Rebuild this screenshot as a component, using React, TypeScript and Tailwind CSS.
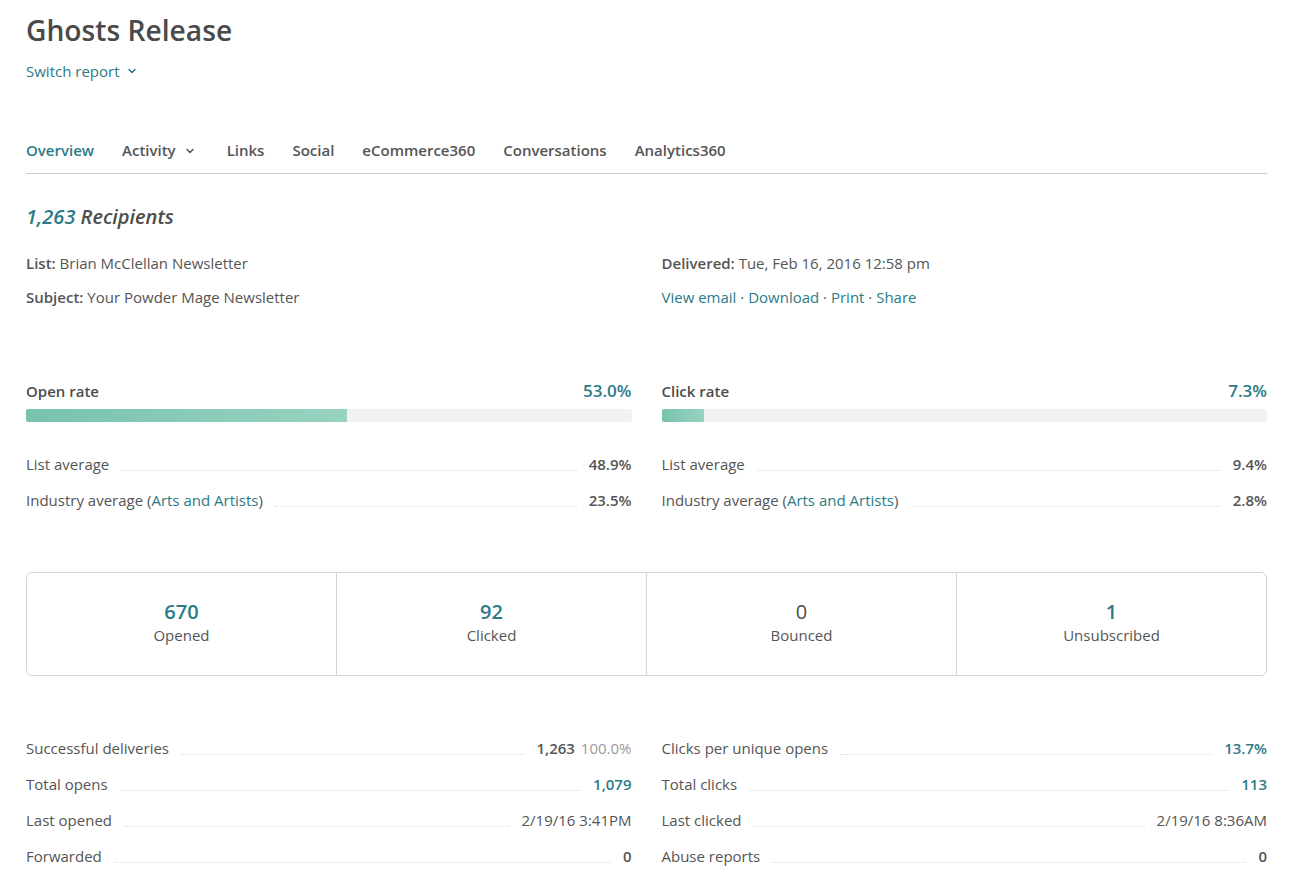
import { ChevronDown } from "lucide-react";

const TEAL = "text-[#2b7b87]";

const tabs = ["Links", "Social", "eCommerce360", "Conversations", "Analytics360"];

const Row = ({ label, children, className = "h-9" }: { label: React.ReactNode; children: React.ReactNode; className?: string }) => (
  <div className={`flex items-center ${className}`}>
    <span className="whitespace-nowrap">{label}</span>
    <span className="mx-[12px] mt-[13px] flex-1 border-b border-dotted border-[#dddddd]" />
    <span className="whitespace-nowrap">{children}</span>
  </div>
);

const Rate = ({ title, value, pct }: { title: string; value: string; pct: number }) => (
  <div>
    <div className="flex h-[22px] items-center justify-between">
      <span className="font-semibold text-[#4d4d4d]">{title}</span>
      <span className={`text-[17px] font-semibold ${TEAL}`}>{value}</span>
    </div>
    <div className="mt-[7px] h-[13px] overflow-hidden rounded-[2px] bg-[#f2f2f2]">
      <div className="h-full bg-gradient-to-r from-[#77c3ae] to-[#98d2c1]" style={{ width: `${pct}%` }} />
    </div>
  </div>
);

const Averages = ({ list, industry }: { list: string; industry: string }) => (
  <div className="mt-[24px]">
    <Row label="List average"><b className="font-semibold">{list}</b></Row>
    <Row label={<>Industry average (<a className={TEAL}>Arts and Artists</a>)</>}>
      <b className="font-semibold">{industry}</b>
    </Row>
  </div>
);

const Stat = ({ value, label, accent = true }: { value: string; label: string; accent?: boolean }) => (
  <div className="flex flex-1 flex-col items-center justify-center border-l border-[#d5d5d5] pb-[3px] first:border-l-0">
    <span className={`text-[20px] leading-[26px] ${accent ? `font-semibold ${TEAL}` : "font-normal text-[#4d4d4d]"}`}>{value}</span>
    <span className="mt-[-1px] leading-[22px]">{label}</span>
  </div>
);

export default function App() {
  return (
    <div className="min-h-[881px] overflow-hidden bg-white pr-[32px] pl-[26px] font-['Open_Sans',sans-serif] text-[15px] text-[#555555]">
      <h1 className="pt-[9px] text-[28.2px] leading-[42px] font-semibold text-[#4a4a4a]">Ghosts Release</h1>
      <div className={`mt-[9px] flex h-[22px] items-center gap-[6px] ${TEAL}`}>
        Switch report <ChevronDown size={12} strokeWidth={3} />
      </div>

      <nav className="mt-[50px] flex h-[42px] items-start gap-[28px] border-b border-[#cccccc] pt-[7px] font-semibold text-[#555555]">
        <a className={TEAL}>Overview</a>
        <a className="mr-[3px] flex items-center gap-[8px]">Activity <ChevronDown size={12} strokeWidth={3} className="mt-[2px]" /></a>
        {tabs.map((t) => (
          <a key={t}>{t}</a>
        ))}
      </nav>

      <h2 className="mt-[27px] text-[20px] leading-[32px] font-semibold italic text-[#4d4d4d]">
        <span className={TEAL}>1,263</span> Recipients
      </h2>

      <div className="mt-[19px] grid grid-cols-2 gap-x-[30px] gap-y-[12px] leading-[22px]">
        <div><b className="font-semibold">List:</b> Brian McClellan Newsletter</div>
        <div><b className="font-semibold">Delivered:</b> Tue, Feb 16, 2016 12:58 pm</div>
        <div><b className="font-semibold">Subject:</b> Your Powder Mage Newsletter</div>
        <div className={TEAL}>
          View email <span className="text-[#555555]">·</span> Download <span className="text-[#555555]">·</span> Print <span className="text-[#555555]">·</span> Share
        </div>
      </div>

      <div className="mt-[72px] grid grid-cols-2 gap-x-[30px]">
        <div>
          <Rate title="Open rate" value="53.0%" pct={53} />
          <Averages list="48.9%" industry="23.5%" />
        </div>
        <div>
          <Rate title="Click rate" value="7.3%" pct={7} />
          <Averages list="9.4%" industry="2.8%" />
        </div>
      </div>

      <div className="mt-[54px] flex h-[104px] rounded-[6px] border border-[#d5d5d5]">
        <Stat value="670" label="Opened" />
        <Stat value="92" label="Clicked" />
        <Stat value="0" label="Bounced" accent={false} />
        <Stat value="1" label="Unsubscribed" />
      </div>

      <div className="mt-[54px] grid grid-cols-2 gap-x-[30px]">
        <div>
          <Row label="Successful deliveries"><b className="font-semibold">1,263</b> <span className="ml-[2px] text-[#999999]">100.0%</span></Row>
          <Row label="Total opens"><b className={`font-semibold ${TEAL}`}>1,079</b></Row>
          <Row label="Last opened">2/19/16 3:41PM</Row>
          <Row label="Forwarded"><b className="font-semibold">0</b></Row>
        </div>
        <div>
          <Row label="Clicks per unique opens"><b className={`font-semibold ${TEAL}`}>13.7%</b></Row>
          <Row label="Total clicks"><b className={`font-semibold ${TEAL}`}>113</b></Row>
          <Row label="Last clicked">2/19/16 8:36AM</Row>
          <Row label="Abuse reports"><b className="font-semibold">0</b></Row>
        </div>
      </div>
    </div>
  );
}
